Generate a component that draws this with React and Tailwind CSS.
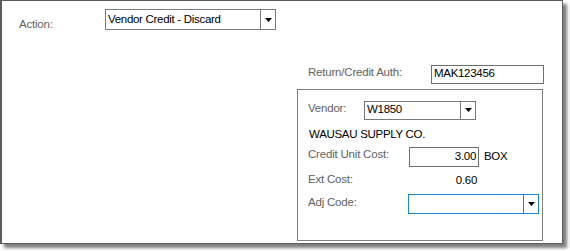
import React from 'react';

const font = { fontFamily: '"Liberation Sans", Arial, sans-serif' };

function Arrow() {
    return (
        <svg width="7" height="4" viewBox="0 0 7 4">
            <path d="M0 0 H7 L3.5 4 Z" fill="#000" />
        </svg>
    );
}

function Dropdown({ value, className, blue }) {
    return (
        <div className={`flex items-stretch bg-white border ${blue ? 'border-[#1e86d8]' : 'border-[#7a7a7a]'} ${className}`}>
            <div className="flex-1 flex items-center pl-[2px] text-[11.5px] text-black tracking-[-0.3px] leading-none">{value}</div>
            <div className={`w-[15px] flex items-center justify-center border-l ${blue ? 'border-[#1e86d8]' : 'border-[#7a7a7a]'}`}>
                <Arrow />
            </div>
        </div>
    );
}

function Label({ children, className = '' }) {
    return <span className={`text-[11.5px] text-[#626262] tracking-[-0.2px] leading-none ${className}`}>{children}</span>;
}

export default function App() {
    return (
        <div className="w-[570px] h-[251px] bg-white" style={font}>
            <div className="w-[563px] h-[244px] border border-[#5c5c5c] border-l-2 bg-white shadow-[4px_4px_3px_rgba(0,0,0,0.5)] flex flex-col">
                {/* Action row */}
                <div className="flex items-center mt-[8px]">
                    <Label className="ml-[17px] w-[86px] pt-[10px]">Action:</Label>
                    <Dropdown value="Vendor Credit - Discard" className="w-[171px] h-[21px]" />
                </div>

                {/* Return / credit auth */}
                <div className="flex items-center mt-[34px] ml-[306px]">
                    <Label className="w-[123px] -mt-[3px]">Return/Credit Auth:</Label>
                    <div className="w-[113px] h-[19px] border border-[#6f6f6f] flex items-center pl-[2px] text-[11.5px] tracking-[-0.3px] text-black">MAK123456</div>
                </div>

                {/* Vendor group box */}
                <div className="ml-[295px] mt-[5px] w-[246px] h-[152px] border border-[#7f7f7f] flex flex-col">
                    <div className="flex items-center mt-[11px]">
                        <Label className="ml-[10px] w-[56px] -mt-[3px]">Vendor:</Label>
                        <Dropdown value="W1850" className="w-[112px] h-[19px]" />
                    </div>
                    <div className="ml-[11px] mt-[7px] text-[11.5px] tracking-[-0.3px] text-black leading-[14px]">WAUSAU SUPPLY CO.</div>
                    <div className="flex items-center mt-[6px]">
                        <Label className="ml-[10px] w-[101px] -mt-[3px]">Credit Unit Cost:</Label>
                        <div className="w-[70px] h-[20px] border border-[#6f6f6f] flex items-center justify-end pr-[2px] text-[11.5px] tracking-[-0.3px] text-black">3.00</div>
                        <span className="ml-[5px] text-[11.5px] tracking-[-0.3px] text-black pt-[1px]">BOX</span>
                    </div>
                    <div className="flex items-center mt-[6px] h-[16px]">
                        <Label className="ml-[10px] w-[101px] -mt-[2px]">Ext Cost:</Label>
                        <div className="w-[68px] text-right text-[11.5px] tracking-[-0.3px] text-black pt-[1px]">0.60</div>
                    </div>
                    <div className="flex items-center mt-[5px]">
                        <Label className="ml-[10px] w-[100px] -mt-[2px]">Adj Code:</Label>
                        <Dropdown value="" blue className="w-[131px] h-[20px]" />
                    </div>
                </div>
            </div>
        </div>
    );
}
